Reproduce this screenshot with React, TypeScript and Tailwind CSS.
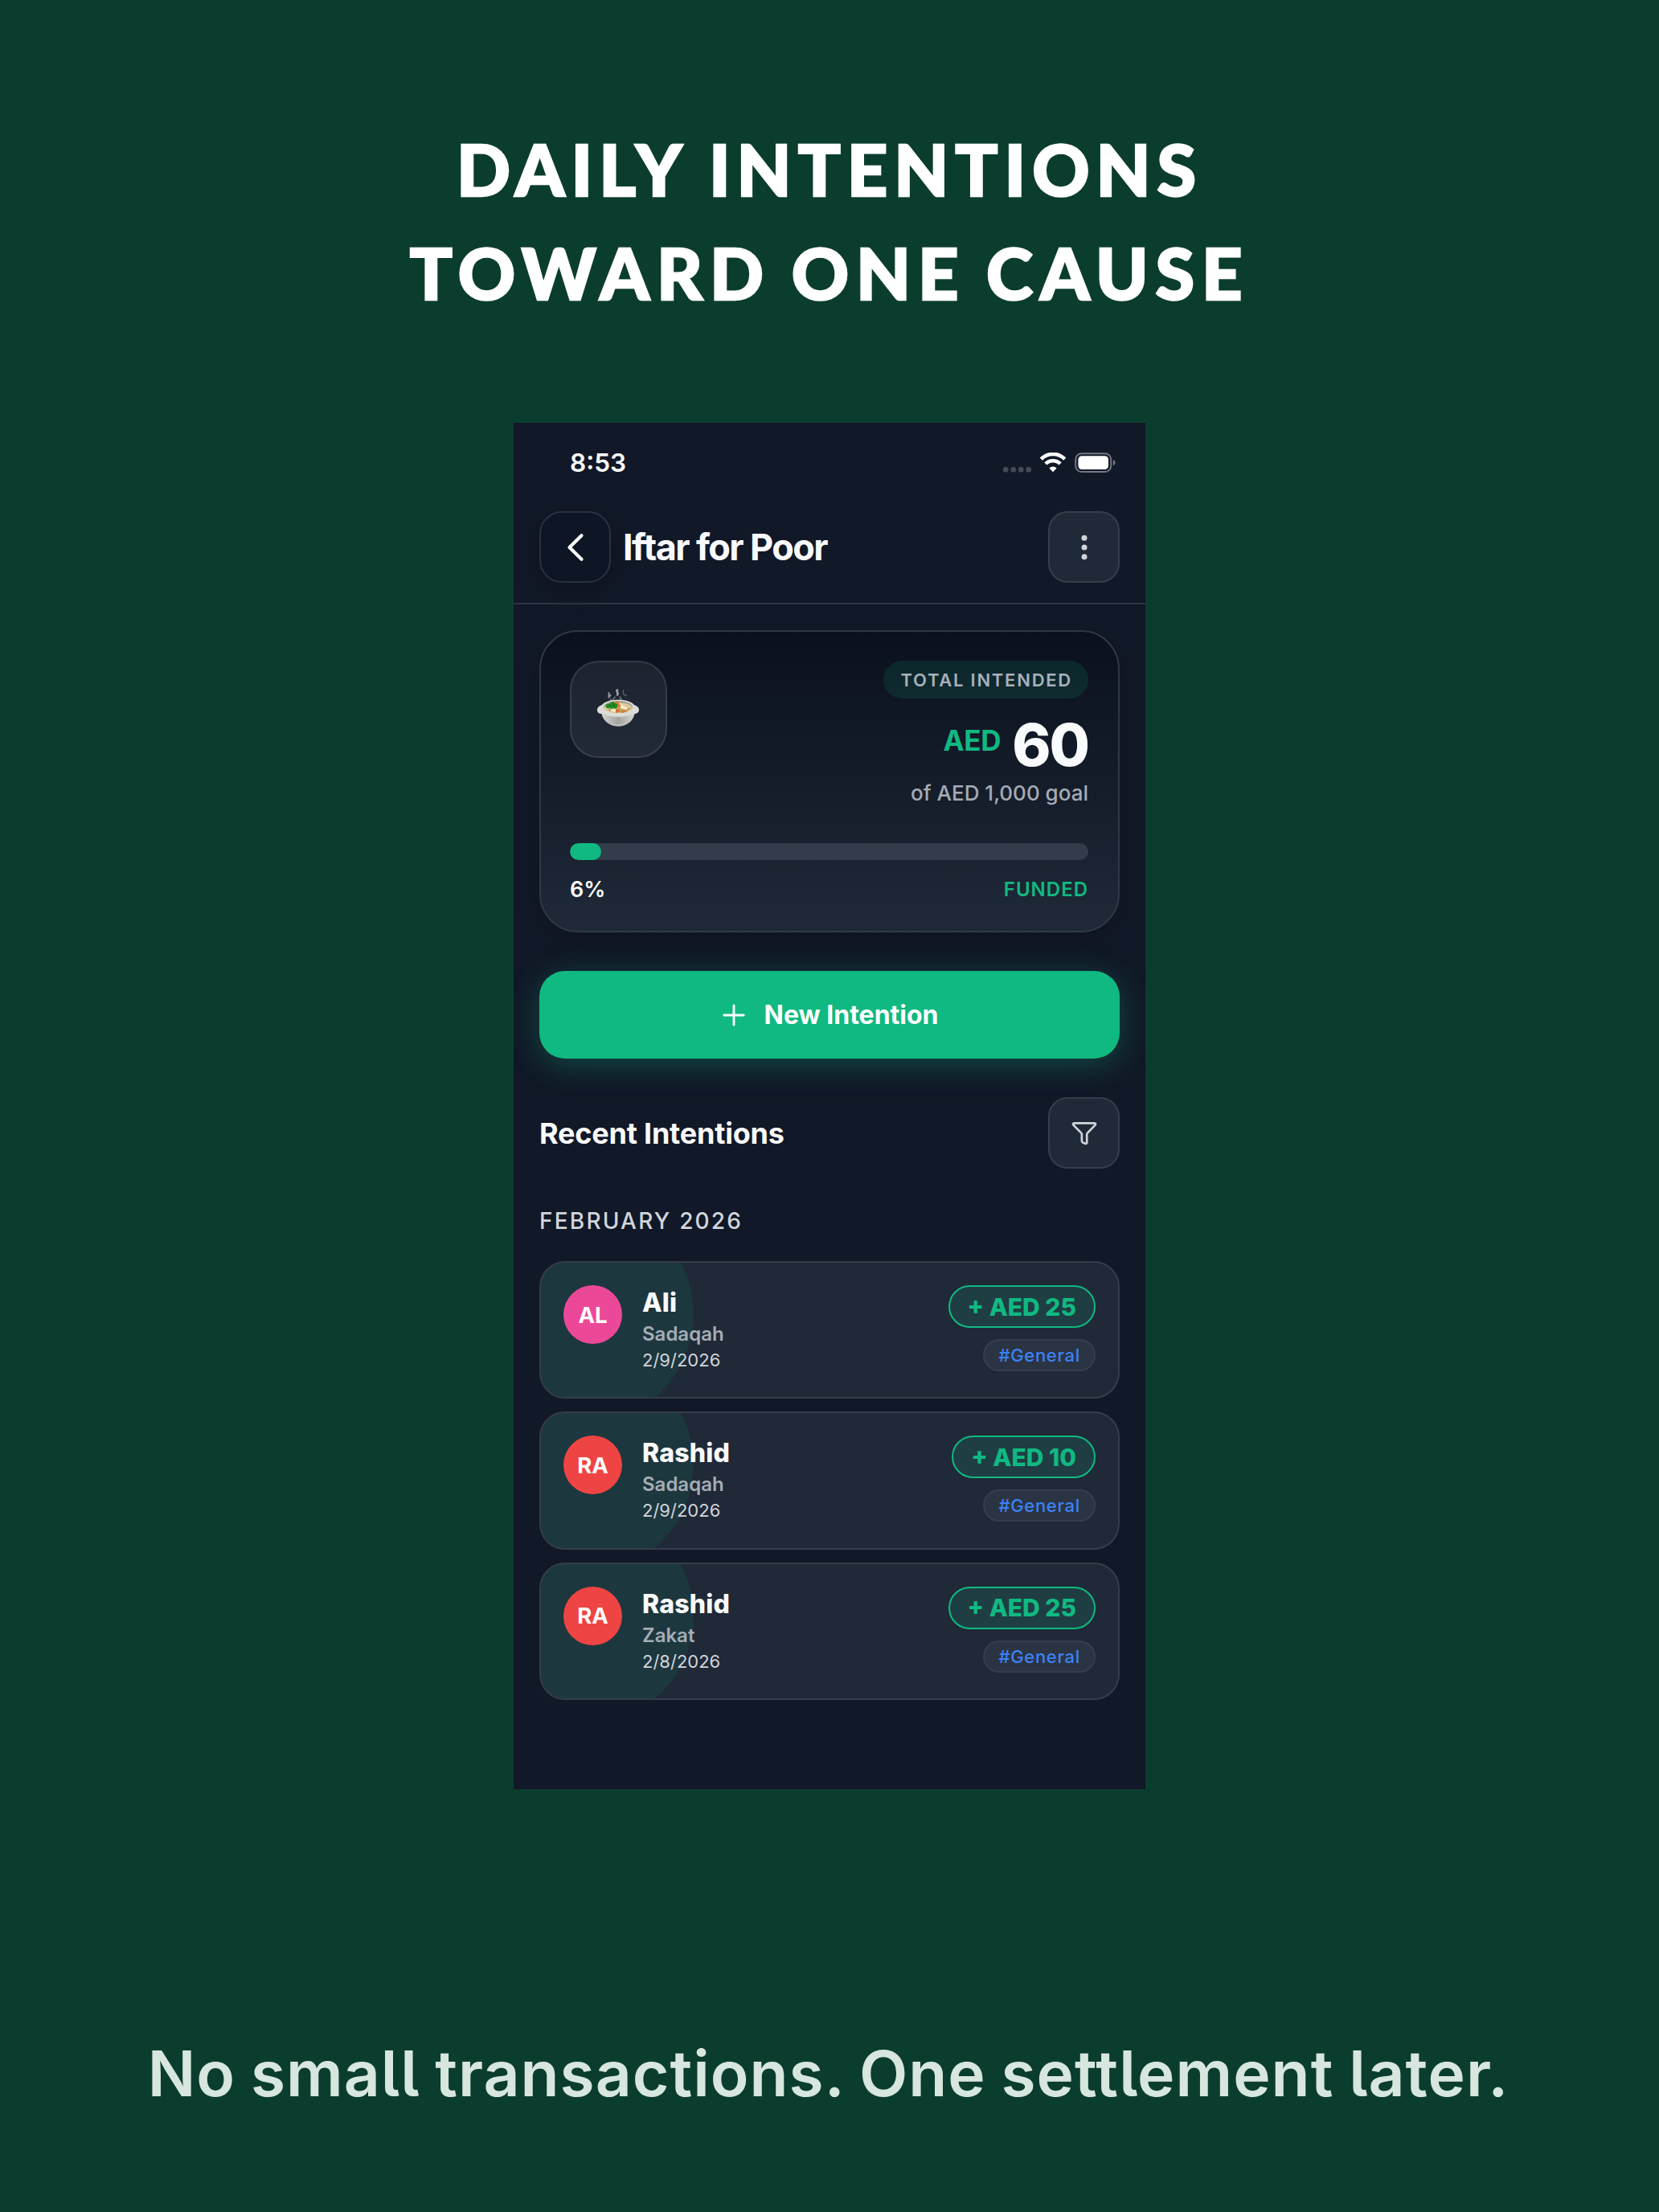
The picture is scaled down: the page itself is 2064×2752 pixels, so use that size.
import React from 'react'

interface Intention {
  initials: string
  name: string
  type: string
  date: string
  amount: string
  tag: string
  avatar: string
}

const intentions: Intention[] = [
  { initials: 'AL', name: 'Ali', type: 'Sadaqah', date: '2/9/2026', amount: '+ AED 25', tag: '#General', avatar: 'bg-[#ec4899]' },
  { initials: 'RA', name: 'Rashid', type: 'Sadaqah', date: '2/9/2026', amount: '+ AED 10', tag: '#General', avatar: 'bg-[#ef4444]' },
  { initials: 'RA', name: 'Rashid', type: 'Zakat', date: '2/8/2026', amount: '+ AED 25', tag: '#General', avatar: 'bg-[#ef4444]' },
]

const StatusBar = () => (
  <div className="flex h-[99px] items-center justify-between pl-[70px] pr-[36px]">
    <span className="text-[31.5px] leading-[40px] font-semibold text-white">8:53</span>
    <svg className="h-[26px] w-[141px]" viewBox="0 0 141 26" fill="none">
      <g fill="#454a57">
        <rect x="0" y="18" width="6.4" height="6.4" rx="2" />
        <rect x="9.5" y="18" width="6.4" height="6.4" rx="2" />
        <rect x="19" y="18" width="6.4" height="6.4" rx="2" />
        <rect x="28.5" y="18" width="6.4" height="6.4" rx="2" />
      </g>
      <g stroke="#fff" strokeWidth="4.6">
        <path d="M47.3 8.2a20.5 20.5 0 0 1 29.4 0" />
        <path d="M52.9 14a12.8 12.8 0 0 1 18.2 0" />
      </g>
      <path d="M62 24.2l-4.6-4.8a6.6 6.6 0 0 1 9.2 0z" fill="#fff" />
      <rect x="90.2" y="1.2" width="44" height="22.8" rx="7.4" stroke="#757983" strokeWidth="1.9" />
      <rect x="93.4" y="4.2" width="37.6" height="16.8" rx="4.6" fill="#fff" />
      <path d="M136.8 9v7.4c1.6-.6 2.8-2 2.8-3.7s-1.2-3.1-2.8-3.7z" fill="#757983" />
    </svg>
  </div>
)

const Header = () => (
  <div className="mt-[11px] flex items-center border-b-2 border-[#2d3544] px-[32px] pb-[25px]">
    <div className="flex h-[89px] w-[89px] items-center justify-center rounded-[28px] border-2 border-[#293242] bg-[#0e1525] shadow-[0_8px_32px_rgba(0,0,0,0.22)]">
      <svg className="h-[40px] w-[30px]" viewBox="0 0 30 40" fill="none" stroke="#f9fafb" strokeWidth="4.2" strokeLinecap="round" strokeLinejoin="round">
        <path d="M22.5 5.2L7.5 20l15 14.8" />
      </svg>
    </div>
    <h1 className="ml-[15px] text-[45px] leading-[56px] font-bold tracking-[-1.6px] text-[#f9fafb]">Iftar for Poor</h1>
    <div className="ml-auto flex h-[89px] w-[89px] items-center justify-center rounded-[24px] border-2 border-[#353e4c] bg-[#1f2937]">
      <svg className="h-[32px] w-[8px]" viewBox="0 0 8 32" fill="#d1d5db">
        <circle cx="4" cy="4.2" r="3.5" />
        <circle cx="4" cy="16" r="3.5" />
        <circle cx="4" cy="27.8" r="3.5" />
      </svg>
    </div>
  </div>
)

// Steaming pot of food used as the campaign icon
const PotIcon = () => (
  <svg className="mr-[2px] mb-[3px] h-[48px] w-[54px]" viewBox="0 0 54 48">
    <defs>
      <linearGradient id="bowl" x1="0" y1="0" x2="1" y2="0">
        <stop offset="0" stopColor="#d6d6d2" />
        <stop offset="0.5" stopColor="#a3a3a0" />
        <stop offset="1" stopColor="#d9d9d5" />
      </linearGradient>
    </defs>
    <path d="M6 28c1 11 9 18.5 21 18.5S47 39 48 28z" fill="url(#bowl)" />
    <path d="M11 38c4 6 9 8.5 16 8.5S39 44 43 38c-4 4-9 6-16 6s-12-2-16-6z" fill="#bdbdb9" />
    <path d="M1 26c0-3 3-5 6-6 3-4 11-6.5 20-6.5S44 16 47 20c3 1 6 3 6 6 0 4-4 5.5-7 5-5 2.6-12 3.8-19 3.8S13 33.6 8 31c-4 .5-7-1-7-5z" fill="#dcdcd8" />
    <ellipse cx="27" cy="22.5" rx="18" ry="7.5" fill="#a39f90" />
    <ellipse cx="27" cy="23.6" rx="17" ry="6.4" fill="#e0cfa0" />
    <path d="M30 20l8 2 5 2-6 5-12 1-8-3z" fill="#c9a25c" />
    <path d="M29 18l7 4 4 1-3 3-7-2zM16 26l7-1 3 3-4 1z" fill="#f7ecd0" />
    <path d="M24 26l4-1 1 3-5 2zM14 25l4 1-1 2zM30 28l5-1 3 1-6 2z" fill="#cf7431" />
    <path d="M24 15.5l3 .5 3.5 5.5-2 1.5-4-3z" fill="#f0752b" />
    <path d="M11.5 22c0-3 3-4 5-3.5 1-2.5 5-3 6.5-1 3 0 4 3 3 5.5-1.5 2-4 1.5-5 1-2 1.5-4 1-4.5 0-2.5.5-5 0-5-2z" fill="#238a23" />
    <path d="M16 19l2 3m3-4l1 4" stroke="#115f17" strokeWidth="1" />
    <g fill="none" stroke="#b8bbc0" strokeLinecap="round">
      <path d="M15.5 5v5l2-2" strokeWidth="1.8" opacity="0.8" />
      <path d="M26 1.5c-2 2 2 3 0 6" strokeWidth="2.6" opacity="0.85" />
      <path d="M33.5 2c-1 2 1 3 0 5" strokeWidth="1.4" opacity="0.4" />
      <path d="M18 12.5v2M23 10l-2 3M29 10l2 3M35.5 7.5l1 1" strokeWidth="1.5" opacity="0.55" />
    </g>
  </svg>
)

const SummaryCard = () => (
  <div className="mt-[32px] h-[376px] rounded-[48px] border-2 border-[#2f3847] bg-linear-to-b from-[#0a101e] to-[#1f2937] pr-[37px] pl-[36px] pt-[36px] shadow-[0_8px_32px_rgba(0,0,0,0.16)]">
    <div className="flex items-start justify-between">
      <div className="flex h-[121px] w-[121px] items-center justify-center rounded-[36px] border-2 border-white/10 bg-white/7">
        <PotIcon />
      </div>
      <div className="flex flex-col items-end">
        <div className="flex h-[47px] items-center rounded-full bg-[#10b981]/13 pr-[20px] pl-[21px]">
          <span className="text-[22px] leading-[30px] font-semibold tracking-[1.75px] text-[#a9b0ba]">TOTAL INTENDED</span>
        </div>
        <div className="mt-[25px] flex h-[64px] items-start">
          <span className="mr-[14px] text-[35px] leading-[54px] font-bold tracking-[-0.3px] text-[#10b981]">AED</span>
          <span className="text-[73px] leading-[66px] font-extrabold tracking-[-2px] text-[#f9fafb]">60</span>
        </div>
        <p className="mt-[10px] text-[26px] leading-[37px] font-medium text-[#a5abb5]">of AED 1,000 goal</p>
      </div>
    </div>
    <div className="mt-[44px] h-[21px] overflow-hidden rounded-full bg-[#323c4a]">
      <div className="h-full rounded-full bg-[#10b981]" style={{ width: '6%' }}></div>
    </div>
    <div className="mt-[20px] flex justify-between leading-[33px]">
      <span className="text-[27px] font-semibold text-[#f9fafb]">6%</span>
      <span className="text-[24px] font-semibold tracking-[1px] text-[#10b981]">FUNDED</span>
    </div>
  </div>
)

const IntentionCard = ({ item }: { item: Intention }) => (
  <div className="relative flex h-[171.4px] items-start overflow-hidden rounded-[32px] border-2 border-[#343d4b] bg-[#1f2937] px-[28px] pt-[28px]">
    {/* green tint behind the avatar */}
    <div className="absolute top-[-71px] left-[-80px] h-[270px] w-[270px] rounded-full bg-[#10b981]/10"></div>
    <div className={`relative flex h-[73px] w-[73px] items-center justify-center rounded-full ${item.avatar}`}>
      <span className="text-[27.5px] leading-[36px] font-bold text-white">{item.initials}</span>
    </div>
    <div className="relative ml-[25px] flex flex-col">
      <span className="mt-[1px] text-[32px] leading-[41px] font-extrabold tracking-[0.2px] text-[#f9fafb]">{item.name}</span>
      <span className="mt-[2px] text-[24px] leading-[34px] font-semibold text-[#a5adb6]">{item.type}</span>
      <span className="mt-[-1px] text-[22px] leading-[32px] text-[#d1d5db]">{item.date}</span>
    </div>
    <div className="relative ml-auto flex flex-col items-end">
      <div className="flex h-[53px] items-center rounded-full border-2 border-[#10b981] bg-[#1e3e43] px-[22px]">
        <span className="text-[30px] leading-[36px] font-extrabold text-[#10b981]">{item.amount}</span>
      </div>
      <div className="mt-[14px] flex h-[40px] items-center rounded-full border-2 border-[#353e4d] bg-[#2b3443] pr-[17px] pl-[17px]">
        <span className="text-[22px] leading-[30px] font-medium tracking-[0.7px] text-[#3b82f6]">{item.tag}</span>
      </div>
    </div>
  </div>
)

const PhoneScreen = () => (
  <div className="mt-[120px] h-[1700px] w-[786px] overflow-hidden bg-[#111827] font-['Inter',sans-serif]">
    <StatusBar />
    <Header />
    <div className="px-[32px]">
      <SummaryCard />

      <button className="mt-[48px] flex h-[109px] w-full items-center justify-center rounded-[32px] bg-[#10b981] pl-[3px] shadow-[0_8px_40px_rgba(16,185,129,0.3)]">
        <svg className="mr-[23px] h-[28px] w-[28px]" viewBox="0 0 28 28" stroke="#fff" strokeWidth="2.8" strokeLinecap="round">
          <path d="M14 1.8v24.4M1.8 14h24.4" />
        </svg>
        <span className="text-[32px] leading-[40px] font-bold text-white">New Intention</span>
      </button>

      <div className="mt-[48px] flex items-center justify-between">
        <h2 className="text-[36px] leading-[44px] font-bold tracking-[-0.2px] text-[#f9fafb]">Recent Intentions</h2>
        <div className="flex h-[89px] w-[89px] items-center justify-center rounded-[24px] border-2 border-[#353e4c] bg-[#1f2937]">
          <svg className="h-[32px] w-[32px]" viewBox="0 0 32 32" fill="none" stroke="#d1d5db" strokeWidth="2.7" strokeLinecap="round" strokeLinejoin="round">
            <path d="M3.4 3.3h25.2c1.3 0 1.9 1.4 1 2.3L20.1 15.4c-.6.6-.9 1.3-.9 2.1v10.1c0 1-.9 1.6-1.8 1.2l-3.2-1.3c-.8-.4-1.3-1-1.3-1.9v-8.1c0-.8-.3-1.5-.9-2.1L2.4 5.6c-.9-.9-.3-2.3 1-2.3z" />
          </svg>
        </div>
      </div>

      <p className="mt-[45px] text-[28px] leading-[41px] font-medium tracking-[2.2px] text-[#d1d5db]">FEBRUARY 2026</p>

      <div className="mt-[29px] flex flex-col gap-[16px]">
        {intentions.map((item, index) => (
          <IntentionCard key={index} item={item} />
        ))}
      </div>
    </div>
  </div>
)

export default function App() {
  return (
    <div className="flex h-[2752px] w-[2064px] flex-col items-center bg-[#0b3d2e] pt-[146px]">
      <div className="mb-[2px] text-center font-['Lato',sans-serif] text-[88px] leading-[129px] font-black whitespace-nowrap text-white [-webkit-text-stroke:2.5px_white]">
        <p className="tracking-[8px]">DAILY INTENTIONS</p>
        <p className="tracking-[8.9px] [word-spacing:-4px]">TOWARD ONE CAUSE</p>
      </div>
      <PhoneScreen />
      <p className="mt-[304px] mr-[3px] font-['Inter',sans-serif] text-[78.5px] leading-[100px] font-semibold tracking-[1px] whitespace-nowrap text-[#d7e6df] [font-feature-settings:'cv05'] [word-spacing:-2px]">
        No small transactions. One settlement later.
      </p>
    </div>
  )
}
